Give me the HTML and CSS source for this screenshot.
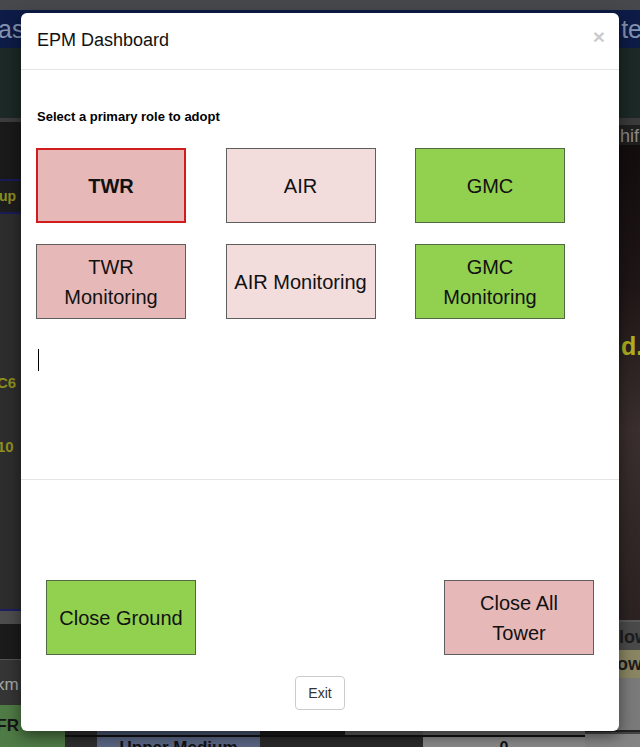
FILE: index.html
```html
<!DOCTYPE html>
<html>
<head>
<meta charset="utf-8">
<title>EPM Dashboard</title>
<link rel="stylesheet" href="styles.css">
</head>
<body>
<div class="dash">
  <div class="topbar"></div>
  <div class="titlebar"><span class="tb-left">as</span><span class="tb-right">te</span></div>
  <div class="band"></div>
  <div class="main">
    <div class="col-left">
      <div class="l-a"></div>
      <div class="l-group">up 1</div>
      <div class="l-body"><span class="l-c6">C6</span><span class="l-10">10</span></div>
      <div class="l-gray"></div>
      <div class="l-dark"></div>
      <div class="l-km">km</div>
      <div class="l-vfr">VFR</div>
    </div>
    <div class="col-mid">
      <div class="mid-fill"></div>
      <div class="trow trow-top">
        <div class="tc c1"></div><div class="tc c2"></div><div class="tc c3a"></div><div class="tc c3b"></div><div class="tc c4"></div>
      </div>
      <div class="trow trow-bot">
        <div class="tc c1"></div><div class="tc c2 blue">Upper Medium</div><div class="tc c3"></div><div class="tc c4 light">0</div>
      </div>
    </div>
    <div class="col-right">
      <div class="r-line"></div>
      <div class="r-shift">hif</div>
      <div class="r-photo"><span class="r-d">d.</span></div>
      <div class="r-low">low</div>
      <div class="r-ow">ow</div>
      <div class="r-gray"></div>
      <div class="r-gray2"></div>
    </div>
  </div>
</div>

<div class="modal">
  <div class="modal-header">
    <h4 class="modal-title">EPM Dashboard</h4>
    <span class="close">&times;</span>
  </div>
  <div class="modal-body">
    <p class="prompt">Select a primary role to adopt</p>
    <div class="roles">
      <button class="role twr selected">TWR</button>
      <button class="role air">AIR</button>
      <button class="role gmc">GMC</button>
      <button class="role twr">TWR<br>Monitoring</button>
      <button class="role air">AIR Monitoring</button>
      <button class="role gmc">GMC<br>Monitoring</button>
    </div>
    <div class="caret"></div>
  </div>
  <div class="modal-footer">
    <div class="close-row">
      <button class="role gmc">Close Ground</button>
      <button class="role twr">Close All<br>Tower</button>
    </div>
    <button class="exit">Exit</button>
  </div>
</div>
</body>
</html>
```

FILE: styles.css
```css
html, body {
  margin: 0;
  padding: 0;
}
body {
  width: 640px;
  height: 747px;
  overflow: hidden;
  position: relative;
  background: #262626;
  font-family: "Liberation Sans", Arial, sans-serif;
}

/* ---------- dimmed dashboard behind ---------- */
.dash {
  display: flex;
  flex-direction: column;
  height: 747px;
}
.topbar {
  height: 10px;
  background: #47484b;
}
.titlebar {
  height: 38px;
  background: #0d1c47;
  display: flex;
  justify-content: space-between;
  align-items: center;
  font-size: 25px;
  color: #8593b0;
  overflow: hidden;
}
.tb-left { margin-left: -2px; }
.tb-right { margin-right: -2px; }
.band {
  height: 70px;
  background: #1c2926;
}
.main {
  flex: 1;
  display: grid;
  grid-template-columns: 65px 1fr 55px;
}
.col-left, .col-mid, .col-right {
  display: flex;
  flex-direction: column;
}
.l-a {
  height: 57px;
  background: #1a1a1a;
  border-top: 4px solid #3c3c3c;
}
.l-group {
  height: 31px;
  border-top: 2px solid #1a1a5a;
  border-bottom: 2px solid #1a1a5a;
  background: #1d1d1d;
  color: #8f8f1e;
  font-weight: bold;
  font-size: 14px;
  line-height: 31px;
  text-indent: -1px;
}
.l-body {
  height: 395px;
  background: #2d2d2d;
  border-bottom: 2px solid #1e1e62;
  position: relative;
  color: #8f8f1e;
  font-weight: bold;
  font-size: 15px;
  display: flex;
  flex-direction: column;
}
.l-c6 { margin-top: 160px; margin-left: -3px; }
.l-10 { margin-top: 47px; margin-left: -3px; }
.l-gray {
  height: 13px;
  background: #4d4d4d;
}
.l-dark {
  height: 35px;
  background: #1b1b1b;
}
.l-km {
  height: 45px;
  background: #353535;
  border-top: 1px solid #555;
  color: #a8a8a8;
  font-size: 17px;
  line-height: 50px;
  text-indent: -4px;
}
.l-vfr {
  flex: 1;
  background: #4f7b46;
  color: #161616;
  font-size: 17px;
  font-weight: bold;
  line-height: 42px;
  text-indent: -15px;
}

.mid-fill {
  flex: 1;
  background: #262626;
}
.trow {
  display: grid;
  grid-template-columns: 32px 163px 85px 78px 1fr;
}
.trow-bot {
  grid-template-columns: 32px 163px 163px 1fr;
  border-top: 2px solid #111;
}
.trow-top .tc { height: 16px; }
.trow-bot .tc { height: 10px; }
.c1 { background: #2e2e2e; }
.c2 { background: #4a5570; }
.c3a { background: #1b1b1b; }
.c3b { background: #5c5c5c; }
.c3 { background: #2a2a2a; }
.c4 { background: #6a6a6a; }
.blue {
  background: #5a6684;
  color: #111;
  font-weight: bold;
  font-size: 17px;
  text-align: center;
  overflow: hidden;
  line-height: 22px;
}
.light {
  background: #8a8a8a;
  color: #111;
  font-weight: bold;
  font-size: 16px;
  text-align: center;
  line-height: 22px;
  overflow: hidden;
}

.r-line {
  height: 7px;
  background: #3a3a3a;
}
.r-shift {
  height: 20px;
  background: #1f1f1f;
  color: #8a8a8a;
  font-size: 18px;
  line-height: 22px;
  padding-left: 35px;
  overflow: hidden;
}
.r-photo {
  height: 475px;
  background: linear-gradient(180deg, #130d0d 0%, #1f1616 30%, #3a2e2e 60%, #2c2222 100%);
  color: #b0b01f;
  font-weight: bold;
  font-size: 25px;
  padding-left: 36px;
  box-sizing: border-box;
  padding-top: 187px;
}
.r-low {
  height: 30px;
  background: #4a4a4a;
  border-top: 2px solid #5a5a5a;
  color: #1c1c1c;
  font-weight: bold;
  font-size: 18px;
  line-height: 30px;
  padding-left: 34px;
  overflow: hidden;
  box-sizing: border-box;
}
.r-ow {
  height: 28px;
  background: #8a8562;
  color: #1c1c1c;
  font-weight: bold;
  font-size: 18px;
  line-height: 28px;
  padding-left: 32px;
  overflow: hidden;
}
.r-gray {
  height: 52px;
  background: #7a7a7a;
  border-bottom: 2px solid #222;
}
.r-gray2 {
  flex: 1;
  background: #858585;
  border-top: 2px solid #444;
}

/* ---------- modal ---------- */
.modal {
  position: absolute;
  left: 21px;
  top: 13px;
  width: 598px;
  height: 718px;
  background: #fff;
  border-radius: 6px;
  box-shadow: 0 5px 15px rgba(0, 0, 0, 0.5);
  display: flex;
  flex-direction: column;
  box-sizing: border-box;
}
.modal-header {
  height: 57px;
  box-sizing: border-box;
  border-bottom: 1px solid #e5e5e5;
  padding: 15px 16px 15px 16px;
  display: flex;
  justify-content: space-between;
  align-items: flex-start;
}
.modal-title {
  margin: 0;
  font-size: 18px;
  font-weight: normal;
  line-height: 25px;
  color: #111;
}
.close {
  font-size: 21px;
  font-weight: bold;
  color: #000;
  opacity: 0.2;
  line-height: 18px;
  margin-top: 0;
  margin-right: -2px;
}
.modal-body {
  height: 410px;
  box-sizing: border-box;
  border-bottom: 1px solid #e5e5e5;
  padding: 0 15px;
}
.prompt {
  margin: 38px 0 22px 1px;
  font-size: 13px;
  font-weight: bold;
  line-height: 18px;
  color: #000;
}
.roles {
  display: grid;
  grid-template-columns: repeat(3, 150px);
  column-gap: 39.5px;
  row-gap: 21px;
}
.role {
  width: 150px;
  height: 75px;
  box-sizing: border-box;
  border: 1px solid #5e5e5e;
  border-radius: 0;
  padding: 0;
  margin: 0;
  font-family: "Liberation Sans", Arial, sans-serif;
  font-size: 20px;
  line-height: 30px;
  color: #111;
  text-align: center;
}
.twr { background: #e6b8b8; }
.air { background: #f2dcdc; }
.gmc { background: #92d050; border-color: #4f6b3f; }
.selected {
  border: 2px solid #d01c1c;
  font-weight: bold;
}
.caret {
  width: 1px;
  height: 22px;
  background: #000;
  margin: 30px 0 0 2px;
}
.modal-footer {
  flex: 1;
  display: flex;
  flex-direction: column;
  align-items: center;
  padding-top: 100px;
}
.close-row {
  align-self: stretch;
  display: flex;
  justify-content: space-between;
  padding: 0 25px 0 25px;
}
.exit {
  margin-top: 21px;
  width: 50px;
  height: 34px;
  box-sizing: border-box;
  background: #fff;
  border: 1px solid #ccc;
  border-radius: 4px;
  font-family: "Liberation Sans", Arial, sans-serif;
  font-size: 14px;
  color: #333;
  padding: 0;
}
```
